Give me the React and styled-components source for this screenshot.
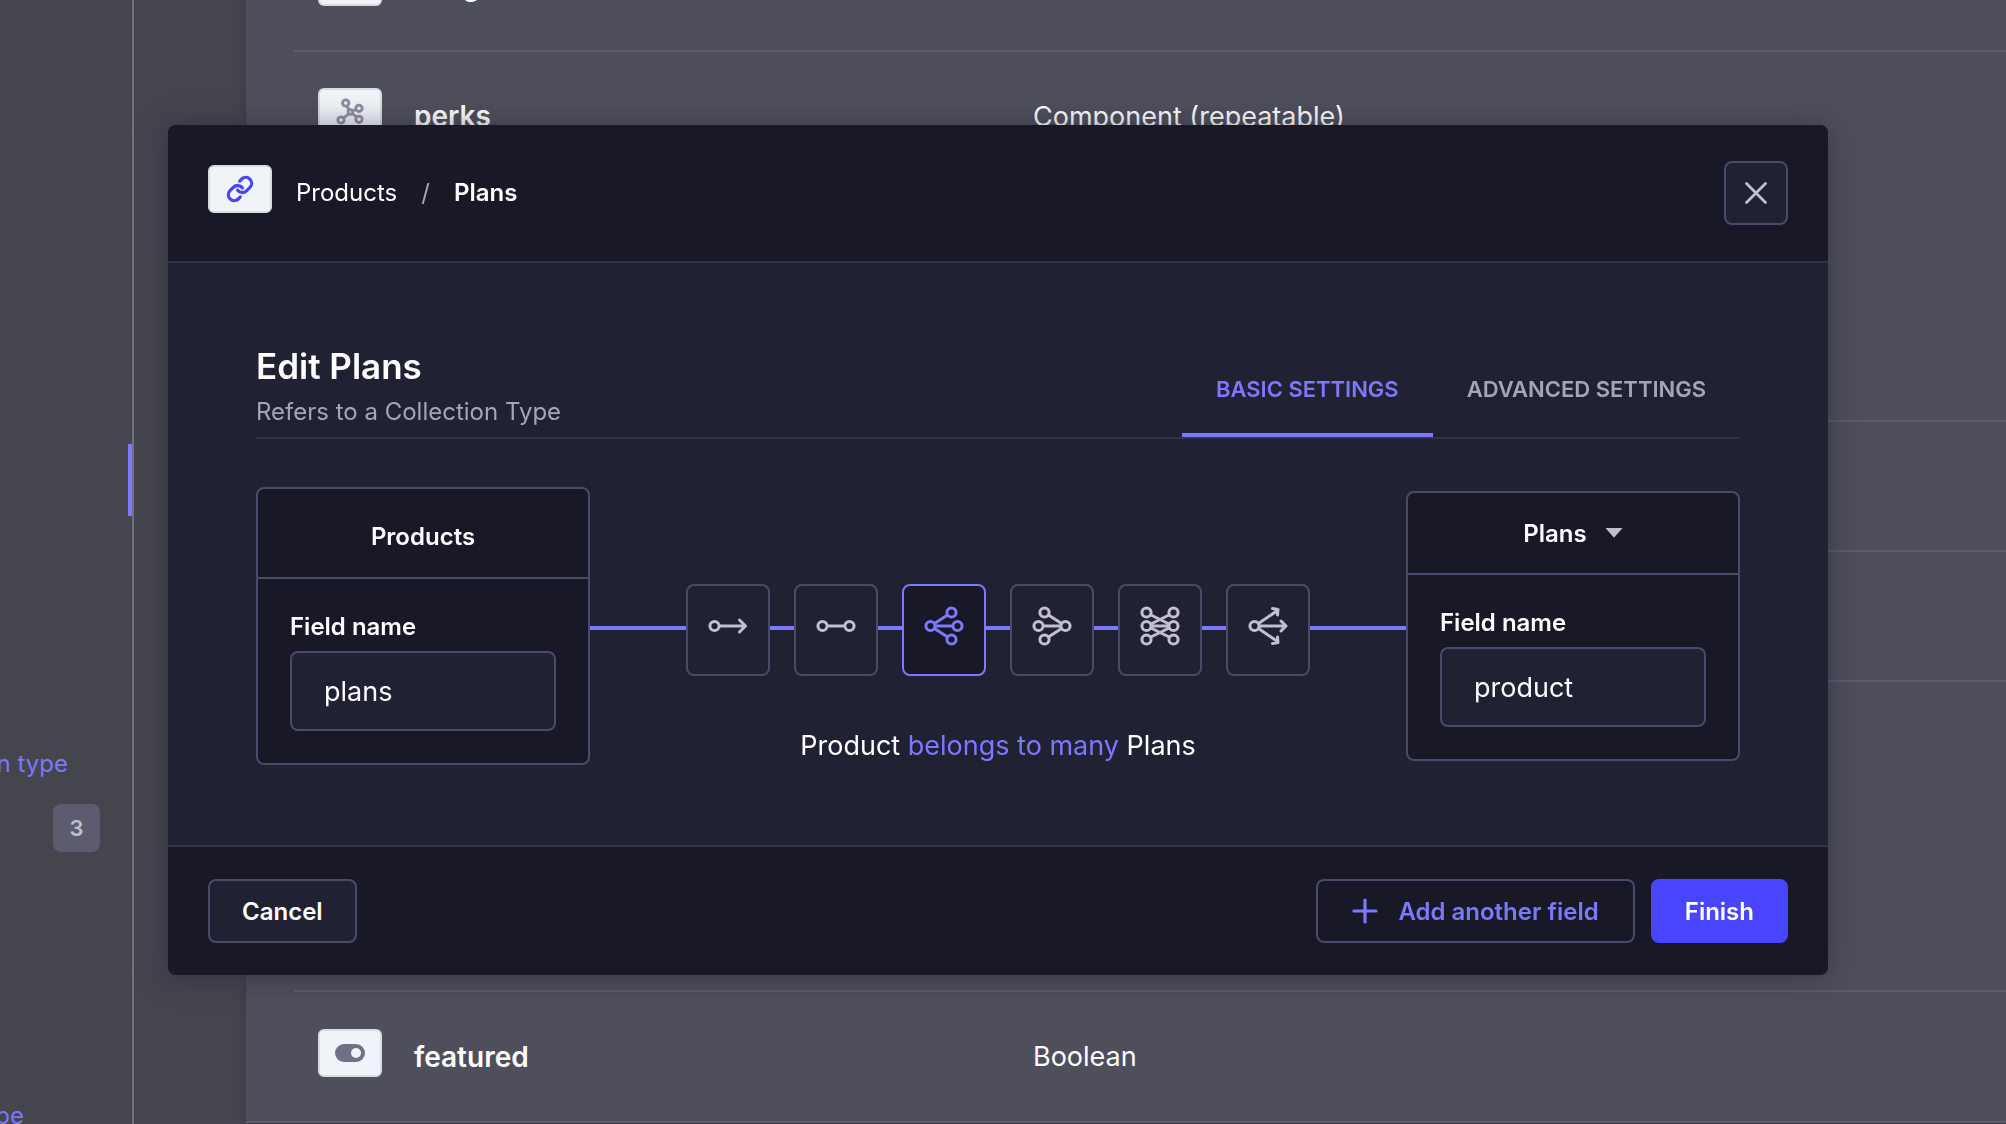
import React from "react";
import styled, { createGlobalStyle, css } from "styled-components";

const c = {
  page: "#45454e",
  panel: "#4f4e5b",
  rule: "#5c5b70",
  sideRule: "#727184",
  dark: "#181826",
  body: "#212134",
  border: "#4a4a6a",
  divider: "#32324d",
  accent: "#7b79ff",
  primary: "#4945ff",
  muted: "#a5a5ba",
  icon: "#c0c0cf",
};

const GlobalStyle = createGlobalStyle`
  *, *::before, *::after { box-sizing: border-box; }
  body {
    margin: 0;
    overflow: hidden;
    background: ${c.page};
    color: #ffffff;
    font-family: Inter, "Liberation Sans", sans-serif;
    -webkit-font-smoothing: antialiased;
  }
  button, input, select { font: inherit; color: inherit; margin: 0; }
  h1, h2, p { margin: 0; }
`;

/* Page behind the dialog */
const Page = styled.div`
  display: flex;
  height: 100vh;
  overflow: hidden;
`;

const Sidebar = styled.nav`
  width: 134px;
  flex: none;
  border-right: 2px solid ${c.sideRule};
  display: flex;
  flex-direction: column;
  align-items: flex-end;
  overflow: hidden;
  & > * { flex-shrink: 0; }
`;

const ActiveMark = styled.div`
  width: 4px;
  height: 72px;
  margin-top: 444px;
  background: ${c.accent};
`;

const SideLink = styled.a`
  display: block;
  line-height: 32px;
  font-size: 24px;
  white-space: nowrap;
  text-decoration: none;
  color: ${c.accent};
  margin-top: ${(p) => p.$top}px;
  margin-right: ${(p) => p.$end}px;
`;

const Count = styled.span`
  display: grid;
  place-items: center;
  width: 47px;
  height: 48px;
  margin: 24px 32px 0 0;
  border-radius: 8px;
  background: ${c.rule};
  color: ${c.icon};
  font-size: 22px;
  font-weight: 600;
`;

const Content = styled.main`
  flex: 1;
  min-width: 0;
  padding-left: 112px;
  overflow: hidden;
`;

const Panel = styled.div`
  background: ${c.panel};
  margin-top: -80px;
  border-bottom: 2px solid ${c.rule};
  box-shadow: 0 2px 8px rgba(33, 33, 52, 0.3);
`;

const FieldTable = styled.table`
  width: calc(100% - 48px);
  margin-left: 48px;
  border-collapse: collapse;
  table-layout: fixed;
`;

const FieldRow = styled.tr`
  height: ${(p) => p.$height || 130}px;
  border-top: 2px solid ${(p) => (p.$plain ? "transparent" : c.rule)};
`;

const NameCell = styled.td`
  width: 739px;
  padding: 0 0 0 24px;
  font-size: 28px;
  font-weight: 600;
`;

const TypeCell = styled.td`
  padding: 0;
  font-size: 27px;
`;

const NameGroup = styled.div`
  display: flex;
  align-items: center;
  gap: 32px;
`;

const Chip = styled.span`
  display: grid;
  place-items: center;
  flex: none;
  width: 64px;
  height: 48px;
  margin-bottom: 8px;
  border: 2px solid #d9dbe2;
  border-radius: 6px;
  background: #f0f4f8;
`;

/* Dialog */
const Overlay = styled.div`
  position: fixed;
  inset: 0;
  display: flex;
  align-items: flex-start;
  padding: 125px 178px 0 168px;
`;

const Dialog = styled.section`
  flex: 1;
  min-width: 0;
  border-radius: 8px;
  overflow: hidden;
  background: ${c.body};
  box-shadow: 0 2px 30px rgba(33, 33, 52, 0.5);
`;

const DialogHeader = styled.header`
  display: flex;
  align-items: center;
  justify-content: space-between;
  padding: 36px 40px;
  background: ${c.dark};
  border-bottom: 2px solid ${c.divider};
`;

const Crumbs = styled.div`
  display: flex;
  align-items: center;
  gap: 24px;
  font-size: 24px;
  line-height: 32px;
`;

const Slash = styled.span`
  color: ${c.muted};
`;

const Strong = styled.span`
  font-weight: 600;
`;

const Button = styled.button`
  display: flex;
  align-items: center;
  justify-content: center;
  gap: 20px;
  height: 64px;
  padding: 0 32px;
  border: 2px solid ${c.border};
  border-radius: 8px;
  background: ${c.body};
  font-size: 24px;
  font-weight: 600;
  cursor: pointer;
  ${(p) => p.$kind === "icon" && css`width: 64px; padding: 0; color: ${c.icon};`}
  ${(p) => p.$kind === "outline" && css`padding: 0 34px; background: ${c.dark}; color: ${c.accent};`}
  ${(p) => p.$kind === "primary" && css`background: ${c.primary}; border-color: ${c.primary};`}
`;

const DialogBody = styled.div`
  padding: 80px 88px;
`;

const TitleRow = styled.div`
  display: flex;
  align-items: flex-end;
  justify-content: space-between;
  border-bottom: 2px solid ${c.divider};
`;

const TitleBlock = styled.div`
  margin-top: -4px;
  padding-bottom: 4px;
`;

const Title = styled.h1`
  font-size: 35px;
  line-height: 50px;
  font-weight: 600;
`;

const Subtitle = styled.p`
  font-size: 24px;
  line-height: 42px;
  color: ${c.muted};
`;

const Tabs = styled.div`
  display: flex;
`;

const Tab = styled.button`
  height: 94px;
  padding: 2px 34px 0;
  border: 0;
  border-bottom: 4px solid ${(p) => (p.$active ? c.accent : "transparent")};
  background: none;
  color: ${(p) => (p.$active ? c.accent : c.muted)};
  font-size: 22px;
  font-weight: 600;
  text-transform: uppercase;
  cursor: pointer;
`;

const Relation = styled.div`
  display: flex;
  align-items: center;
  margin-top: 48px;
`;

const EntityCard = styled.div`
  width: 334px;
  flex: none;
  border: 2px solid ${c.border};
  border-radius: 8px;
  background: ${c.dark};
`;

const EntityHead = styled.div`
  display: flex;
  align-items: center;
  justify-content: center;
  gap: 18px;
  height: ${(p) => p.$height}px;
  padding-top: ${(p) => p.$padTop || 0}px;
  border-bottom: 2px solid ${c.border};
  font-size: 24px;
  font-weight: 600;
`;

const EntitySelect = styled.select`
  appearance: none;
  border: 0;
  padding: 0;
  background: none;
  field-sizing: content;
  font-weight: 600;
  cursor: pointer;
`;

const EntityField = styled.div`
  display: flex;
  flex-direction: column;
  gap: 8px;
  padding: 32px;
`;

const FieldLabel = styled.label`
  font-size: 24px;
  line-height: 32px;
  font-weight: 600;
`;

const TextInput = styled.input`
  width: 100%;
  height: 80px;
  padding: 0 32px;
  border: 2px solid ${c.border};
  border-radius: 8px;
  background: ${c.body};
  font-size: 27px;
`;

const Middle = styled.div`
  flex: 1;
  min-width: 0;
  align-self: stretch;
  padding-top: 97px;
`;

const Choices = styled.div`
  display: flex;
`;

const Connector = styled.span`
  height: 4px;
  margin-top: 42px;
  background: ${c.accent};
  ${(p) => (p.$edge ? css`flex: 1;` : css`width: 24px;`)}
`;

const Choice = styled.button`
  display: grid;
  place-items: center;
  flex: none;
  width: 84px;
  height: 92px;
  padding: 0 0 8px;
  border: 2px solid ${(p) => (p.$active ? c.accent : c.border)};
  border-radius: 8px;
  background: ${(p) => (p.$active ? c.dark : "transparent")};
  color: ${(p) => (p.$active ? c.accent : c.icon)};
  cursor: pointer;
`;

const Sentence = styled.p`
  margin-top: 52px;
  text-align: center;
  font-size: 27px;
  line-height: 36px;
`;

const Highlight = styled.span`
  color: ${c.accent};
`;

const DialogFooter = styled.footer`
  display: flex;
  align-items: center;
  justify-content: space-between;
  padding: 32px 40px;
  background: ${c.dark};
  border-top: 2px solid ${c.divider};
`;

const Actions = styled.div`
  display: flex;
  gap: 16px;
`;

/* Icons */
const LinkIcon = () => (
  <svg width="28" height="28" viewBox="0 0 24 24" fill="none" stroke={c.primary} strokeWidth="2.8" strokeLinecap="round" strokeLinejoin="round" aria-hidden="true">
    <path d="M10 13a5 5 0 0 0 7.54.54l3-3a5 5 0 0 0-7.07-7.07l-1.72 1.71" />
    <path d="M14 11a5 5 0 0 0-7.54-.54l-3 3a5 5 0 0 0 7.07 7.07l1.71-1.71" />
  </svg>
);

const ComponentIcon = () => (
  <svg width="28" height="28" viewBox="0 0 28 28" fill="none" stroke="#8e8ea0" strokeWidth="2.8" aria-hidden="true">
    <path d="M11 8L13 12M16.500 13L20 11.500M12.500 16L7.500 20M16.500 15.500L20.500 19" />
    <circle cx="9.700" cy="5" r="3.200" />
    <circle cx="23" cy="10.300" r="3.200" />
    <circle cx="14.300" cy="14" r="2.300" />
    <circle cx="5" cy="22" r="3.200" />
    <circle cx="23" cy="21.300" r="3.200" />
  </svg>
);

const ToggleIcon = () => (
  <svg width="30" height="18" viewBox="0 0 30 18" aria-hidden="true">
    <rect width="30" height="18" rx="9" fill="#707186" />
    <circle cx="21" cy="9" r="5" fill="#f0f4f8" />
  </svg>
);

const MediaIcon = () => (
  <svg width="28" height="20" viewBox="0 0 28 20" aria-hidden="true">
    <rect width="28" height="20" rx="3" fill="#8e8ea0" />
  </svg>
);

const CloseIcon = () => (
  <svg width="24" height="24" viewBox="0 0 24 24" stroke="currentColor" strokeWidth="2.8" strokeLinecap="round" aria-hidden="true">
    <path d="M2.500 2.500L21.500 21.500M21.500 2.500L2.500 21.500" />
  </svg>
);

const PlusIcon = () => (
  <svg width="26" height="26" viewBox="0 0 26 26" stroke="currentColor" strokeWidth="3.2" strokeLinecap="round" aria-hidden="true">
    <path d="M13 2V24M2 13H24" />
  </svg>
);

const CaretIcon = () => (
  <svg width="18" height="10" viewBox="0 0 18 10" fill={c.icon} aria-hidden="true">
    <path d="M0.500 0H17.500L9 9.800Z" />
  </svg>
);

const shapes = {
  oneWay: {
    nodes: [[6.5, 20]],
    d: "M11.500 20H37M31.500 14L37.500 20L31.500 26",
  },
  oneToOne: { nodes: [[6.5, 20], [33.5, 20]], d: "M11.500 20H28.500" },
  oneToMany: {
    nodes: [[6.5, 20], [27.5, 6.5], [33.5, 20], [27.5, 33.5]],
    d: "M10.500 17.500L23.500 9M11.500 20H28.500M10.500 22.500L23.500 31",
  },
  manyToOne: {
    nodes: [[33.5, 20], [12.5, 6.5], [6.5, 20], [12.5, 33.5]],
    d: "M29.500 17.500L16.500 9M28.500 20H11.500M29.500 22.500L16.500 31",
  },
  manyToMany: {
    nodes: [[6.5, 6.5], [6.5, 20], [6.5, 33.5], [33.5, 6.5], [33.5, 20], [33.5, 33.5]],
    d: "M11 9L29 18M11 18L29 9M11.500 20H28.500M11 22L29 31M11 31L29 22",
  },
  manyWay: {
    nodes: [[6.5, 20]],
    d: "M10.500 17.500L29.500 4.500M11.500 20H37M10.500 22.500L29.500 35.500M24.500 2.500L30 3.500L29.500 9M33 15L38 20L33 25M24.500 37.500L30 36.500L29.500 31",
  },
};

const RelationIcon = ({ kind }) => (
  <svg width="40" height="40" viewBox="0 0 40 40" fill="none" stroke="currentColor" strokeWidth="3" strokeLinecap="round" strokeLinejoin="round" aria-hidden="true">
    {shapes[kind].nodes.map(([x, y]) => (
      <circle key={`${x}-${y}`} cx={x} cy={y} r="4.600" />
    ))}
    <path d={shapes[kind].d} />
  </svg>
);

const choices = [
  ["oneWay", "has one"],
  ["oneToOne", "has and belongs to one"],
  ["oneToMany", "belongs to many"],
  ["manyToOne", "has many to one"],
  ["manyToMany", "has and belongs to many"],
  ["manyWay", "has many"],
];

const Field = ({ icon, name, type, height, plain }) => (
  <FieldRow $height={height} $plain={plain}>
    <NameCell>
      {name && (
        <NameGroup>
          <Chip>{icon}</Chip>
          {name}
        </NameGroup>
      )}
    </NameCell>
    <TypeCell>{type}</TypeCell>
  </FieldRow>
);

export default function App() {
  return (
    <>
      <GlobalStyle />
      <Page>
        <Sidebar>
          <ActiveMark />
          <SideLink href="#collection" $top={232} $end={64}>Create new collection type</SideLink>
          <Count>3</Count>
          <SideLink href="#single" $top={248} $end={108}>Create new single type</SideLink>
        </Sidebar>
        <Content>
          <Panel>
            <FieldTable>
              <tbody>
                <Field icon={<MediaIcon />} name="images" type="Media" />
                <Field icon={<ComponentIcon />} name="perks" type="Component (repeatable)" />
                <Field height={240} plain />
                <Field />
                <Field />
                <Field height={310} />
                <Field icon={<ToggleIcon />} name="featured" type="Boolean" />
              </tbody>
            </FieldTable>
          </Panel>
        </Content>
      </Page>

      <Overlay>
        <Dialog role="dialog" aria-modal="true" aria-labelledby="dialog-title">
          <DialogHeader>
            <Crumbs>
              <Chip><LinkIcon /></Chip>
              <span>Products</span>
              <Slash>/</Slash>
              <Strong>Plans</Strong>
            </Crumbs>
            <Button type="button" $kind="icon" aria-label="Close"><CloseIcon /></Button>
          </DialogHeader>

          <DialogBody>
            <TitleRow>
              <TitleBlock>
                <Title id="dialog-title">Edit Plans</Title>
                <Subtitle>Refers to a Collection Type</Subtitle>
              </TitleBlock>
              <Tabs role="tablist">
                <Tab type="button" role="tab" aria-selected="true" $active>Basic settings</Tab>
                <Tab type="button" role="tab" aria-selected="false">Advanced settings</Tab>
              </Tabs>
            </TitleRow>

            <Relation>
              <EntityCard>
                <EntityHead $height={90} $padTop={6}>Products</EntityHead>
                <EntityField>
                  <FieldLabel htmlFor="source-name">Field name</FieldLabel>
                  <TextInput id="source-name" defaultValue="plans" />
                </EntityField>
              </EntityCard>

              <Middle>
                <Choices>
                  <Connector $edge />
                  {choices.map(([kind, label], i) => (
                    <React.Fragment key={kind}>
                      {i > 0 && <Connector />}
                      <Choice type="button" aria-label={label} aria-pressed={kind === "oneToMany"} $active={kind === "oneToMany"}>
                        <RelationIcon kind={kind} />
                      </Choice>
                    </React.Fragment>
                  ))}
                  <Connector $edge />
                </Choices>
                <Sentence>
                  Product <Highlight>belongs to many</Highlight> Plans
                </Sentence>
              </Middle>

              <EntityCard>
                <EntityHead $height={82}>
                  <EntitySelect aria-label="Target collection" defaultValue="Plans">
                    <option>Plans</option>
                  </EntitySelect>
                  <CaretIcon />
                </EntityHead>
                <EntityField>
                  <FieldLabel htmlFor="target-name">Field name</FieldLabel>
                  <TextInput id="target-name" defaultValue="product" />
                </EntityField>
              </EntityCard>
            </Relation>
          </DialogBody>

          <DialogFooter>
            <Button type="button">Cancel</Button>
            <Actions>
              <Button type="button" $kind="outline"><PlusIcon />Add another field</Button>
              <Button type="button" $kind="primary">Finish</Button>
            </Actions>
          </DialogFooter>
        </Dialog>
      </Overlay>
    </>
  );
}
